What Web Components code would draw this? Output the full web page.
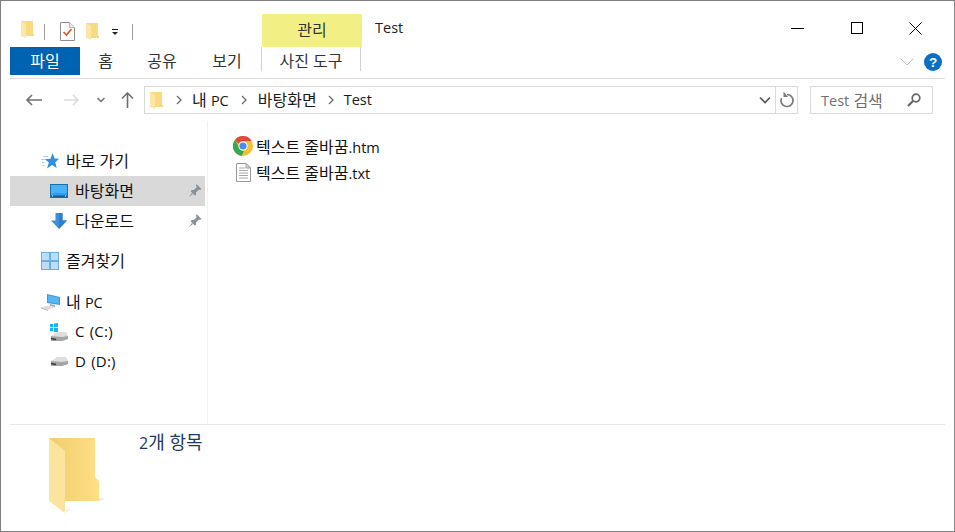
<!DOCTYPE html>
<html lang="ko"><head><meta charset="utf-8">
<style>
html,body{margin:0;padding:0;background:#fff}
body{width:955px;height:532px;overflow:hidden;font-family:"Open Sans","Noto Sans CJK KR",sans-serif;font-size:16px;color:#000}
</style></head><body>
<fx-window>
  <fx-titlebar slot="title"></fx-titlebar>
  <fx-tabs slot="tabs"></fx-tabs>
  <fx-address slot="address"></fx-address>
  <fx-nav slot="nav">
    <fx-nav-item icon="star" level="0" top="25">바로 가기</fx-nav-item>
    <fx-nav-item icon="desktop" level="1" selected pin>바탕화면</fx-nav-item>
    <fx-nav-item icon="down" level="1" pin>다운로드</fx-nav-item>
    <fx-nav-item icon="grid" level="0" top="10">즐겨찾기</fx-nav-item>
    <fx-nav-item icon="pc" level="0" top="11">내 <fx-l>PC</fx-l></fx-nav-item>
    <fx-nav-item icon="cdrive" level="1"><fx-l wide>C (C:)</fx-l></fx-nav-item>
    <fx-nav-item icon="drive" level="1"><fx-l wide>D (D:)</fx-l></fx-nav-item>
  </fx-nav>
  <fx-files slot="files">
    <fx-file icon="chrome">텍스트 줄바꿈<fx-l>.htm</fx-l></fx-file>
    <fx-file icon="doc">텍스트 줄바꿈<fx-l>.txt</fx-l></fx-file>
  </fx-files>
  <fx-status slot="status"><fx-l big>2</fx-l>개 항목</fx-status>
</fx-window>
<script>
const ICONS={
folder:`<svg width="13" height="17" viewBox="0 0 13 17"><path d="M0 0h12v15H0z" fill="#f9da80"/><path d="M0 0l5 3v14l-5-2z" fill="#fde7a5"/><path d="M12 13h1v2h-1z" fill="#f3d27a"/></svg>`,
check:`<svg width="15" height="19" viewBox="0 0 15 19"><path d="M.5.500h9l5 5v13H.5z" fill="#fff" stroke="#8f8f8f"/><path d="M9.500.500v5h5" fill="#eee" stroke="#b5b5b5"/><path d="M3.500 10l3 3 5-6" fill="none" stroke="#e8541c" stroke-width="1.700"/></svg>`,
star:`<svg width="18" height="17" viewBox="0 0 18 17"><path d="M2 3.500h5M0 6.500h4M1 9.500h2.500M1.500 12.500h2" stroke="#a7d0f3" stroke-width="1"/><path d="M11.500 0l2.100 5.500 4.400.2-3.700 3.500 1.400 5.800-4.600-3-5.100 3.500 1.900-6-4-3.300 5.600-.5z" fill="#2f8fe3"/></svg>`,
desktop:`<svg width="18" height="14" viewBox="0 0 18 14"><rect x=".5" y=".5" width="17" height="13" fill="#2f9bf0" stroke="#1c6da8"/><path d="M1 1h16v8C10 10 5 7 1 11z" fill="#49b2f7"/><path d="M1 11.500h16v1.500H1z" fill="#0f5f95"/><path d="M2 12h1M15 12h1" stroke="#fff"/></svg>`,
down:`<svg width="18" height="18" viewBox="0 0 18 18"><path d="M5.500 1h7v7.500H17L9 17 1 8.500h4.500z" fill="#3c8fdc"/><path d="M9 1h3.500v7.500H17L9 17z" fill="#2f7ec8"/></svg>`,
grid:`<svg width="18" height="18" viewBox="0 0 18 18"><rect width="18" height="18" fill="#68aee8"/><rect x="1" y="1" width="7" height="7" fill="#bcdcf7"/><rect x="10" y="1" width="7" height="7" fill="#bcdcf7"/><rect x="1" y="10" width="7" height="7" fill="#bcdcf7"/><rect x="10" y="10" width="7" height="7" fill="#bcdcf7"/></svg>`,
pc:`<svg width="21" height="18" viewBox="0 0 21 18"><path d="M7 1l13 3v8l-13-2z" fill="#3b9ae1"/><path d="M8 2.300l11 2.500v6l-11-1.800z" fill="#55b6f2"/><path d="M10 11l5 1v2l-5-1z" fill="#a9a9a9"/><path d="M1 14.500l7-2 6 2-6 2.500z" fill="#dcdcdc"/><path d="M1 14.500l7 2.500v1l-7-2.500z" fill="#b8b8b8"/></svg>`,
cdrive:`<svg width="20" height="18" viewBox="0 0 20 18"><path d="M1 1h3.300v3.300H1zM5 .500L9 0v4.300H5zM1 5h3.300v3.300H1zM5 5h4v4H5z" fill="#1cb4ee"/><path d="M2 13l6-4h9l2 4v3l-6 2H2z" fill="#dedede"/><path d="M2 13l11 1 6-1v3l-6 2H2z" fill="#a5a5a5"/><path d="M2 15.500l5 1" stroke="#3a3a3a" stroke-width="1.500"/></svg>`,
drive:`<svg width="20" height="10" viewBox="0 0 20 10"><path d="M2 4l6-4h9l2 4v3l-6 2H2z" fill="#dedede"/><path d="M2 4l11 1 6-1v3l-6 2H2z" fill="#a5a5a5"/><path d="M2 6.500l5 1" stroke="#3a3a3a" stroke-width="1.500"/></svg>`,
pin:`<svg width="14" height="14" viewBox="0 0 14 14"><path d="M8.500 0l5 5-1.500 1-1-.5L8 8.500 8 11 6.800 11.500 2.800 7.500 3.500 6 5.800 6l3-2.800-.8-1.200z" fill="#87929d"/><path d="M4 9l-3.500 4.500L5 10z" fill="#87929d"/></svg>`,
chrome:`<svg width="20" height="20" viewBox="0 0 20 20"><circle cx="10" cy="10" r="10" fill="#f1c232"/><path d="M10 0a10 10 0 0 1 8.660 5H10a5 5 0 0 0-4.500 2.800L1.900 3.900A10 10 0 0 1 10 0z" fill="#dc4a3c"/><path d="M1.900 3.900L5.700 10.500a5 5 0 0 0 5.300 4.400L8.500 19.900A10 10 0 0 1 1.900 3.900z" fill="#36a852"/><circle cx="10" cy="10" r="4.600" fill="#fff"/><circle cx="10" cy="10" r="3.600" fill="#4a8af4"/></svg>`,
doc:`<svg width="15" height="19" viewBox="0 0 15 19"><path d="M.5.500h9.500l4.500 4.500v13.500H.5z" fill="#fff" stroke="#9a9a9a"/><path d="M10 .5V5h4.500z" fill="#ddd" stroke="#9a9a9a"/><path d="M3 5h6M3 7.500h9M3 10h9M3 12.500h9M3 15h9" stroke="#a8a8a8"/></svg>`,
big:`<svg width="56" height="76" viewBox="0 0 56 76"><defs><linearGradient id="fg" x1="0" x2="1"><stop offset="0" stop-color="#f0cc6e"/><stop offset="1" stop-color="#ffdf85"/></linearGradient></defs><path d="M50 60l6 1-6 2zM17 72l6-1-6 3z" fill="#e8e8e8"/><path d="M0 0h46v39l4 4v20H0z" fill="url(#fg)"/><path d="M0 0l16 13v62L0 63z" fill="#fde49e"/></svg>`
};
function def(name,css,html,extra={}){
  customElements.define(name,class extends HTMLElement{
    constructor(){super();const r=this.attachShadow({mode:'open'});r.innerHTML=`<style>${css}</style>`+html;}
    connectedCallback(){extra.connected&&extra.connected.call(this,this.shadowRoot);}
  });
}
def('fx-l',`:host{font-size:14.5px}:host([wide]){font-size:15px;word-spacing:1px;letter-spacing:.2px}:host([big]){font-size:16px}`,`<slot></slot>`);
def('fx-icon',`:host{display:inline-flex;align-items:center;justify-content:center;flex:none}svg{display:block}`,'',{connected(r){r.innerHTML+=ICONS[this.getAttribute('name')]||'';}});

def('fx-window',`:host{display:grid;grid-template-rows:46px 32px 42px 303px 107px;box-sizing:border-box;width:955px;height:532px;border:1px solid #7f7f7f;border-right-color:#8a8a8a}`,
`<slot name="title"></slot><slot name="tabs"></slot><slot name="address"></slot>
<div style="display:grid;grid-template-columns:206px 1fr;min-height:0"><slot name="nav"></slot><slot name="files"></slot></div><slot name="status"></slot>`);

def('fx-titlebar',`:host{display:block;height:46px;position:relative}
.qa{display:flex;align-items:center;height:32px;padding-left:20px;position:absolute;left:0;bottom:0}
.sep{width:1px;height:16px;background:#a0a0a0;margin:1px 0 0}
.mgr{width:100px;height:33px;background:#f2f084;display:flex;align-items:center;justify-content:center;color:#333;position:absolute;left:261px;bottom:0;line-height:32px}
.mgr span{position:relative;top:-1px}
.t{position:absolute;left:374px;top:16px;font-size:14.5px;color:#222;line-height:22px}
.wb{display:flex;position:absolute;right:9px;top:0;height:54px}
.b{width:59px;height:54px;display:flex;align-items:center;justify-content:center}
svg{display:block}
`,`<div class="qa"><fx-icon name="folder" style="margin-top:-3px"></fx-icon><span class="sep" style="margin-left:10px"></span><fx-icon name="check" style="margin-left:15px"></fx-icon><fx-icon name="folder" style="margin-left:11px;margin-top:1px"></fx-icon>
<svg style="margin-left:12px;margin-top:2px" width="8" height="8" viewBox="0 0 8 8"><path d="M1 1h6v1H1z" fill="#222"/><path d="M1 4h6L4 7z" fill="#222"/></svg>
<span class="sep" style="margin-left:13px"></span></div>
<div class="mgr"><span>관리</span></div>
<div class="t">Test</div>
<div class="wb">
<div class="b"><svg width="13" height="1"><rect width="13" height="1" fill="#000"/></svg></div>
<div class="b"><svg width="12" height="12"><rect x=".5" y=".5" width="11" height="11" fill="none" stroke="#000"/></svg></div>
<div class="b"><svg width="13" height="13"><path d="M.5.500l12 12M12.500.500l-12 12" stroke="#000" fill="none"/></svg></div></div>`);

def('fx-tabs',`:host{display:flex;position:relative;height:32px;margin:0 9px;box-sizing:border-box;border-bottom:1px solid #dcdcdc;color:#333;align-items:flex-start}
.t{height:28px;display:flex;align-items:center;justify-content:center;line-height:26px}
.file{width:70px;background:#0063b1;color:#fff}
.c{width:100px;border-left:1px solid #d0d0d0;border-right:1px solid #d0d0d0;box-sizing:border-box;height:24px;padding-top:3px}
.end{margin-left:auto;display:flex;align-items:center;gap:10px;height:28px;padding-right:3px;padding-top:1px}
svg{display:block}`,`<div class="t file">파일</div><div class="t" style="width:49px;margin-left:1px">홈</div><div class="t" style="width:46px;margin-left:9px">공유</div><div class="t" style="width:40px;margin-left:22px">보기</div>
<div class="t c" style="margin-left:14px">사진 도구</div>
<div class="end"><svg width="14" height="8" viewBox="0 0 14 8"><path d="M.5.500L7 7 13.500.500" fill="none" stroke="#bdbdbd"/></svg>
<svg width="18" height="18" viewBox="0 0 18 18"><circle cx="9" cy="9" r="9" fill="#0a6fc9"/><text x="9" y="14" text-anchor="middle" font-family="Liberation Sans" font-weight="700" font-size="13.500" fill="#fff">?</text></svg></div>`);

def('fx-address',`:host{display:flex;align-items:center;height:42px;box-sizing:border-box;position:relative}
.nav{width:143px;display:flex;align-items:center;height:28px;flex:none}
.box{width:654px;height:28px;border:1px solid #d9d9d9;box-sizing:border-box;display:flex;align-items:center;flex:none;color:#1a1a1a}
.box>span{position:relative;top:-1px}
.ch{margin:0 10px 0 11px}
.sb{width:21px;height:100%;border-left:1px solid #d9d9d9;display:flex;align-items:center;justify-content:center}
.s{margin-left:12px;width:123px;height:28px;box-sizing:border-box;border:1px solid #d9d9d9;display:flex;align-items:center;padding-left:10px;color:#707070}
svg{display:block;flex:none}`,`<div class="nav">
<svg style="margin-left:24px" width="18" height="12" viewBox="0 0 18 12"><path d="M7 1L2 6l5 5M2 6h15" fill="none" stroke="#707070" stroke-width="1.600"/></svg>
<svg style="margin-left:21px" width="15" height="12" viewBox="0 0 15 12"><path d="M9 1l5 5-5 5M14 6H0" fill="none" stroke="#dcdcdc" stroke-width="1.600"/></svg>
<svg style="margin-left:18px" width="8" height="6" viewBox="0 0 8 6"><path d="M.5 1L4 4.500 7.500 1" fill="none" stroke="#707070" stroke-width="1.500"/></svg>
<svg style="margin-left:16px" width="13" height="16" viewBox="0 0 13 16"><path d="M1 6.500l5.500-5.500 5.500 5.500M6.500 1v15" fill="none" stroke="#707070" stroke-width="1.600"/></svg>
</div><div class="box"><fx-icon name="folder" style="margin-left:5px"></fx-icon>
<svg class="ch" style="margin-left:13px" width="6" height="10" viewBox="0 0 6 10"><path d="M1 1l4 4-4 4" fill="none" stroke="#6a6a6a" stroke-width="1.300"/></svg><span>내 <fx-l>PC</fx-l></span>
<svg class="ch" style="margin-left:12px;margin-right:11px" width="6" height="10" viewBox="0 0 6 10"><path d="M1 1l4 4-4 4" fill="none" stroke="#6a6a6a" stroke-width="1.300"/></svg><span>바탕화면</span>
<svg class="ch" width="6" height="10" viewBox="0 0 6 10"><path d="M1 1l4 4-4 4" fill="none" stroke="#6a6a6a" stroke-width="1.300"/></svg><span><fx-l>Test</fx-l></span>
<svg style="margin-left:auto;margin-right:4px" width="12" height="8" viewBox="0 0 12 8"><path d="M1 1.500L6 6.500l5-5" fill="none" stroke="#555" stroke-width="1.600"/></svg>
<div class="sb"><svg width="16" height="16" viewBox="0 0 16 16"><path d="M8 2.500a6 6 0 1 1-5.500 3.600" fill="none" stroke="#7a7a7a" stroke-width="1.700"/><path d="M4.500 0v5.500H9z" fill="#7a7a7a" transform="translate(0 -.5)"/></svg></div></div>
<div class="s"><fx-l>Test</fx-l>&nbsp;검색<svg style="margin-left:auto;margin-right:11px" width="14" height="14" viewBox="0 0 14 14"><circle cx="9" cy="5" r="3.800" fill="none" stroke="#666" stroke-width="1.700"/><path d="M6 8l-5 5" stroke="#666" stroke-width="2.200"/></svg></div>`);

def('fx-nav',`:host{display:block;box-sizing:border-box;height:100%;border-right:1px solid #f1f1f1;width:207px;overflow:hidden}`,`<slot></slot>`);
customElements.define('fx-nav-item',class extends HTMLElement{
 constructor(){super();const r=this.attachShadow({mode:'open'});
 r.innerHTML=`<style>:host{display:flex;align-items:center;height:30px;margin-left:9px;width:195px;box-sizing:border-box;position:relative;color:#111}
 :host([selected]){background:#d9d9d9}
 .i{width:24px;display:flex;justify-content:center;flex:none;margin-right:4px}
 .l{position:relative;top:-1px;white-space:pre}
 .p{position:absolute;right:3px;top:8px;display:flex}
 </style><div class="i" id="i"></div><span class="l"><slot></slot></span>`;}
 connectedCallback(){
  const lv=+this.getAttribute('level'),r=this.shadowRoot,i=r.getElementById('i');
  i.innerHTML=`<fx-icon name="${this.getAttribute('icon')}"></fx-icon>`;
  i.style.marginLeft=(lv?37:28)+'px';
  const t=this.getAttribute('top');if(t)this.style.marginTop=t+'px';
  if(this.hasAttribute('pin')){const p=document.createElement('div');p.className='p';p.innerHTML=`<fx-icon name="pin"></fx-icon>`;r.appendChild(p);}
 }});
def('fx-files',`:host{display:block;padding:12px 0 0 26px}`,`<slot></slot>`);
customElements.define('fx-file',class extends HTMLElement{
 constructor(){super();const r=this.attachShadow({mode:'open'});
 r.innerHTML=`<style>:host{display:flex;align-items:center;height:26px;color:#111}.i{width:20px;display:flex;justify-content:center;margin-right:3px}</style><div class="i" id="i"></div><span><slot></slot></span>`;}
 connectedCallback(){this.shadowRoot.getElementById('i').innerHTML=`<fx-icon name="${this.getAttribute('icon')}"></fx-icon>`;}
});
def('fx-status',`:host{display:flex;margin:0 9px;border-top:1px solid #e6e6e6;height:107px;box-sizing:border-box;color:#1f3a64;font-size:18px}
.b{margin:13px 0 0 39px;align-self:flex-start}.t{margin:3px 0 0 34px}`,`<fx-icon class="b" name="big"></fx-icon><div class="t"><slot></slot></div>`);
</script>
</body></html>
